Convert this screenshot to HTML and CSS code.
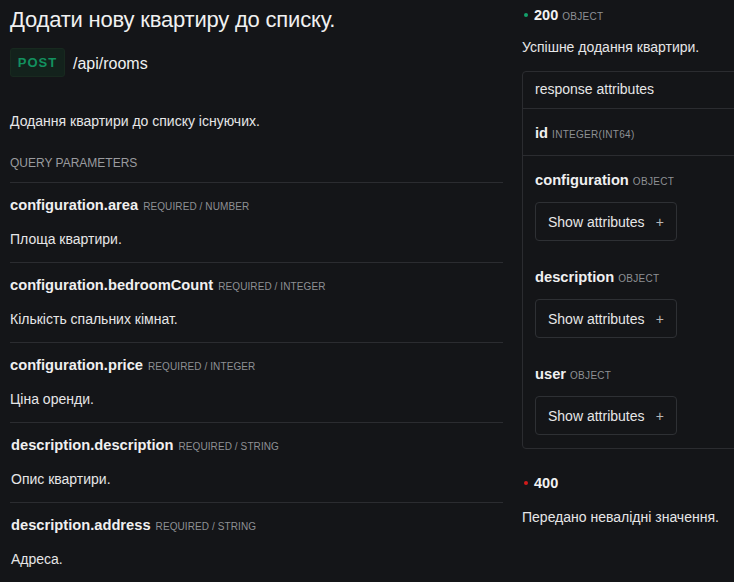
FILE: index.html
```html
<!DOCTYPE html>
<html lang="uk">
<head>
<meta charset="utf-8">
<title>POST /api/rooms</title>
<link rel="stylesheet" href="styles.css">
</head>
<body>
<div class="page">
  <section class="main">
    <h1 class="title">Додати нову квартиру до списку.</h1>
    <div class="endpoint">
      <span class="method">POST</span>
      <span class="path">/api/rooms</span>
    </div>
    <p class="lead">Додання квартири до списку існуючих.</p>
    <div class="section-label">QUERY PARAMETERS</div>
    <ul class="params">
      <li class="param">
        <div class="param-head"><span class="param-name">configuration.area</span><span class="param-meta">REQUIRED / NUMBER</span></div>
        <div class="param-desc">Площа квартири.</div>
      </li>
      <li class="param">
        <div class="param-head"><span class="param-name">configuration.bedroomCount</span><span class="param-meta">REQUIRED / INTEGER</span></div>
        <div class="param-desc">Кількість спальних кімнат.</div>
      </li>
      <li class="param">
        <div class="param-head"><span class="param-name">configuration.price</span><span class="param-meta">REQUIRED / INTEGER</span></div>
        <div class="param-desc">Ціна оренди.</div>
      </li>
      <li class="param shifted">
        <div class="param-head"><span class="param-name">description.description</span><span class="param-meta">REQUIRED / STRING</span></div>
        <div class="param-desc">Опис квартири.</div>
      </li>
      <li class="param shifted">
        <div class="param-head"><span class="param-name">description.address</span><span class="param-meta">REQUIRED / STRING</span></div>
        <div class="param-desc">Адреса.</div>
      </li>
    </ul>
  </section>
  <aside class="responses">
    <div class="status"><span class="dot dot-ok"></span><span class="code">200</span><span class="type">OBJECT</span></div>
    <p class="status-desc">Успішне додання квартири.</p>
    <div class="attr-box">
      <div class="attr-header">response attributes</div>
      <div class="attr-row attr-simple"><span class="attr-name">id</span><span class="type">INTEGER(INT64)</span></div>
      <div class="attr-row attr-object">
        <div class="attr-title"><span class="attr-name">configuration</span><span class="type">OBJECT</span></div>
        <button class="show-btn">Show attributes<span class="plus">+</span></button>
      </div>
      <div class="attr-row attr-object">
        <div class="attr-title"><span class="attr-name">description</span><span class="type">OBJECT</span></div>
        <button class="show-btn">Show attributes<span class="plus">+</span></button>
      </div>
      <div class="attr-row attr-object">
        <div class="attr-title"><span class="attr-name">user</span><span class="type">OBJECT</span></div>
        <button class="show-btn">Show attributes<span class="plus">+</span></button>
      </div>
    </div>
    <div class="status status-err"><span class="dot dot-err"></span><span class="code">400</span></div>
    <p class="status-desc status-desc-err">Передано невалідні значення.</p>
  </aside>
</div>
</body>
</html>
```
FILE: styles.css
```css
html, body {
  margin: 0;
  padding: 0;
  background: #141518;
  color: #e6e6e7;
  font-family: "Liberation Sans", Arial, sans-serif;
  overflow: hidden;
}

.page {
  display: flex;
  gap: 19px;
  padding-left: 10px;
  width: 724px;
  overflow: hidden;
}

.main {
  width: 493px;
  flex: none;
  padding-top: 7px;
}

.title {
  margin: 0;
  font-size: 22px;
  line-height: 26px;
  font-weight: normal;
  letter-spacing: -0.2px;
  color: #f0f0f0;
}

.endpoint {
  display: flex;
  align-items: center;
  margin-top: 15px;
}

.method {
  box-sizing: border-box;
  height: 29px;
  line-height: 27px;
  width: 55px;
  border: 1px solid #18291f;
  border-radius: 3px;
  background: #13221c;
  color: #12915f;
  font-size: 13px;
  font-weight: bold;
  letter-spacing: 1px;
  text-align: center;
}

.path {
  margin-left: 8px;
  padding-top: 2px;
  font-size: 16px;
  color: #f0f0f0;
}

.lead {
  margin: 34px 0 0;
  font-size: 14px;
  line-height: 20px;
}

.section-label {
  margin-top: 24px;
  font-size: 12px;
  line-height: 16px;
  color: #9a9b9f;
  padding-bottom: 11px;
}

.params {
  list-style: none;
  margin: 0;
  padding: 0;
}

.param {
  border-top: 1px solid #2b2c30;
  padding: 12px 0 13px;
}

.shifted .param-head,
.shifted .param-desc {
  padding-left: 1px;
}

.param-head {
  display: flex;
  align-items: baseline;
  height: 20px;
  line-height: 20px;
}

.param-name {
  font-size: 14.7px;
  font-weight: bold;
  color: #f0f0f0;
}

.param-meta {
  margin-left: 5px;
  font-size: 10px;
  color: #8e9094;
  letter-spacing: 0.1px;
}

.param-desc {
  margin-top: 14px;
  font-size: 14px;
  line-height: 20px;
}

.responses {
  flex: none;
  width: 260px;
  padding-top: 5px;
}

.status {
  display: flex;
  align-items: baseline;
  line-height: 20px;
  height: 20px;
}

.dot {
  align-self: center;
  width: 4px;
  height: 4px;
  border-radius: 50%;
  margin: 0 6px 0 2px;
}

.dot-ok { background: #13a06b; }
.dot-err { background: #d21a1a; }

.code {
  font-size: 14.5px;
  font-weight: bold;
  color: #f2f2f2;
}

.type {
  margin-left: 4px;
  font-size: 10px;
  color: #8e9094;
  letter-spacing: 0.3px;
  font-weight: normal;
}

.status-desc {
  margin: 12px 0 0;
  font-size: 14px;
  line-height: 20px;
}

.status-desc-err {
  margin-top: 14px;
}

.attr-box {
  margin-top: 14px;
  border: 1px solid #2b2c30;
  border-radius: 4px;
}

.attr-header {
  padding: 7px 12px 9px;
  font-size: 14px;
  line-height: 20px;
  border-bottom: 1px solid #2b2c30;
}

.attr-row {
  padding: 0 12px;
}

.attr-simple {
  display: flex;
  align-items: baseline;
  height: 20px;
  line-height: 20px;
  padding-top: 14px;
  padding-bottom: 12px;
  border-bottom: 1px solid #2b2c30;
}

.attr-object {
  padding-top: 14px;
}

.attr-object + .attr-object {
  padding-top: 26px;
}

.attr-object:last-child {
  padding-bottom: 13px;
}

.attr-title {
  display: flex;
  align-items: baseline;
  height: 20px;
  line-height: 20px;
}

.attr-name {
  font-size: 14.7px;
  font-weight: bold;
  color: #f0f0f0;
}

.show-btn {
  display: flex;
  align-items: center;
  box-sizing: border-box;
  margin-top: 12px;
  width: 142px;
  height: 39px;
  padding: 0 12px;
  background: transparent;
  border: 1px solid #2e3034;
  border-radius: 4px;
  color: #e6e6e7;
  font-family: "Liberation Sans", Arial, sans-serif;
  font-size: 14px;
}

.plus {
  margin-left: auto;
  color: #b5b6b9;
  font-size: 14px;
}

.status-err {
  margin-top: 24px;
}
```
